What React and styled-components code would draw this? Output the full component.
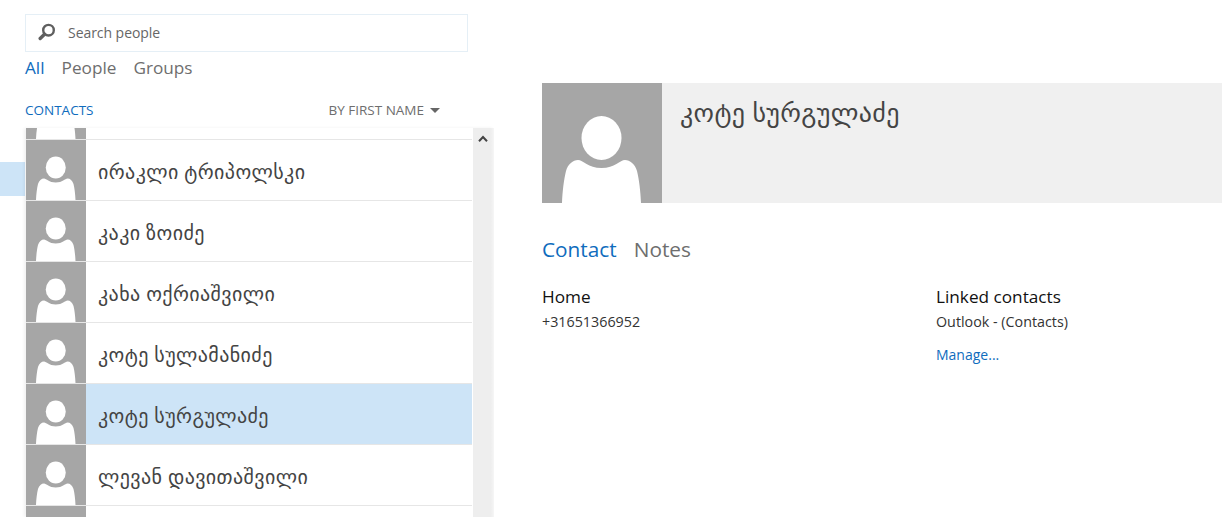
import React from 'react';
import styled, { createGlobalStyle } from 'styled-components';

const GlobalStyle = createGlobalStyle`
  html, body {
    margin: 0;
    height: 100%;
    overflow: hidden;
    background: #fff;
    font-family: "Open Sans", "DejaVu Sans", sans-serif;
  }
`;

const Page = styled.div`
  display: flex;
  width: 1222px;
  height: 517px;
  overflow: hidden;
`;

const Rail = styled.div`
  width: 25px;
  flex: none;
  padding-top: 162px;
`;

const RailSelected = styled.div`
  height: 34px;
  background: #cde4f7;
`;

const PeoplePane = styled.div`
  width: 469px;
  flex: none;
  padding-top: 14px;
  display: flex;
  flex-direction: column;
`;

const SearchBox = styled.div`
  width: 443px;
  height: 38px;
  box-sizing: border-box;
  border: 1px solid #e5eff6;
  display: flex;
  align-items: center;
  padding: 0 0 2px 12px;
  gap: 12px;
  font-size: 14px;
  letter-spacing: -0.05px;
  color: #666;
`;

const Tabs = styled.div`
  display: flex;
  gap: 17px;
  font-size: ${(p) => p.$size}px;
  line-height: 32px;
`;

const Tab = styled.span`
  color: ${(p) => (p.$active ? '#0f6cbd' : '#6e6e6e')};
`;

const ListHeader = styled.div`
  display: flex;
  justify-content: space-between;
  align-items: center;
  width: 415px;
  height: 20px;
  margin-top: 16px;
  margin-bottom: 8px;
  font-size: 13.5px;
`;

const ContactsLabel = styled.span`
  color: #0f6cbd;
`;

const SortLabel = styled.span`
  display: flex;
  align-items: center;
  gap: 6px;
  color: #6e6e6e;
`;

const Caret = styled.span`
  width: 0;
  height: 0;
  border-left: 5.5px solid transparent;
  border-right: 5.5px solid transparent;
  border-top: 5px solid #666;
`;

const ListFrame = styled.div`
  display: flex;
  flex: 1;
  min-height: 0;
  overflow: hidden;
  margin-left: 1px;
  width: 468px;
  box-shadow: -2px 0 3px rgba(0, 0, 0, 0.06);
`;

const List = styled.div`
  flex: 1;
  overflow: hidden;
`;

const Rows = styled.div`
  margin-top: -49px;
`;

const Row = styled.div`
  display: flex;
  align-items: center;
  height: 60px;
  border-bottom: 1px solid #e6e6e6;
  background: ${(p) => (p.$selected ? '#cde4f7' : '#fff')};
  font-size: 20px;
  letter-spacing: 0.4px;
  color: #444;
`;

const RowName = styled.span`
  margin: 2px 0 0 12px;
`;

const Scrollbar = styled.div`
  width: 21px;
  flex: none;
  margin-left: 1px;
  background: linear-gradient(to right, #eeeeee 85%, #f6f6f6);
  display: flex;
  justify-content: center;
  padding: 7px 1px 0 0;
  box-sizing: border-box;
`;

const Detail = styled.div`
  flex: 1;
  margin-left: 48px;
  padding-top: 83px;
`;

const DetailHeader = styled.div`
  display: flex;
  height: 120px;
  background: #f0f0f0;
`;

const DetailName = styled.div`
  margin: 12px 0 0 18px;
  font-size: 26px;
  letter-spacing: 0.35px;
  line-height: 34px;
  color: #444;
`;

const DetailTabs = styled.div`
  margin-top: 30px;
`;

const Columns = styled.div`
  display: flex;
  margin-top: 20px;
`;

const Column = styled.div`
  width: 394px;
  flex: none;
`;

const ColumnTitle = styled.div`
  font-size: 17.2px;
  line-height: 24px;
  color: #111;
`;

const ColumnText = styled.div`
  font-size: 14.3px;
  line-height: 26px;
  color: #333;
`;

const ManageLink = styled.div`
  font-size: 14px;
  line-height: 20px;
  margin-top: 10px;
  color: #0f6cbd;
`;

const Avatar = ({ size }) => (
  <svg width={size} height={size} viewBox="0 0 120 120" style={{ flex: 'none', display: 'block' }}>
    <rect width="120" height="120" fill="#a6a6a6" />
    <ellipse cx="59.5" cy="55" rx="20" ry="22" fill="#fff" />
    <path
      d="M20 120C20.5 108 22 96 24 88C26 81 31 77 36 77C41 77 46 85 59.5 85C73 85 78 77 83 77C88 77 93 81 95 88C97 96 98.5 108 99 120Z"
      fill="#fff"
    />
  </svg>
);

const SearchIcon = () => (
  <svg width="18" height="18" viewBox="0 0 18 18" fill="none">
    <circle cx="10.5" cy="7.2" r="5.3" stroke="#5f5f5f" strokeWidth="2.4" />
    <path d="M6.5 11.2L2.2 15.5" stroke="#5f5f5f" strokeWidth="3.4" strokeLinecap="round" />
  </svg>
);

const UpChevron = () => (
  <svg width="10" height="8" viewBox="0 0 10 8" fill="none">
    <path d="M1 6.2L5 2L9 6.2" stroke="#444" strokeWidth="2" />
  </svg>
);

const contacts = [
  { name: '' },
  { name: 'ირაკლი ტრიპოლსკი' },
  { name: 'კაკი ზოიძე' },
  { name: 'კახა ოქრიაშვილი' },
  { name: 'კოტე სულამანიძე' },
  { name: 'კოტე სურგულაძე', selected: true },
  { name: 'ლევან დავითაშვილი' },
  { name: '' },
];

const App = () => (
  <Page>
    <GlobalStyle />
    <Rail>
      <RailSelected />
    </Rail>
    <PeoplePane>
      <SearchBox>
        <SearchIcon />
        Search people
      </SearchBox>
      <Tabs $size={17.2}>
        <Tab $active>All</Tab>
        <Tab>People</Tab>
        <Tab>Groups</Tab>
      </Tabs>
      <ListHeader>
        <ContactsLabel>CONTACTS</ContactsLabel>
        <SortLabel>
          BY FIRST NAME
          <Caret />
        </SortLabel>
      </ListHeader>
      <ListFrame>
        <List>
          <Rows>
            {contacts.map((c, i) => (
              <Row key={i} $selected={c.selected}>
                <Avatar size={60} />
                <RowName>{c.name}</RowName>
              </Row>
            ))}
          </Rows>
        </List>
        <Scrollbar>
          <UpChevron />
        </Scrollbar>
      </ListFrame>
    </PeoplePane>
    <Detail>
      <DetailHeader>
        <Avatar size={120} />
        <DetailName>კოტე სურგულაძე</DetailName>
      </DetailHeader>
      <DetailTabs>
        <Tabs $size={20.8}>
          <Tab $active>Contact</Tab>
          <Tab>Notes</Tab>
        </Tabs>
      </DetailTabs>
      <Columns>
        <Column>
          <ColumnTitle>Home</ColumnTitle>
          <ColumnText>+31651366952</ColumnText>
        </Column>
        <Column>
          <ColumnTitle>Linked contacts</ColumnTitle>
          <ColumnText>Outlook - (Contacts)</ColumnText>
          <ManageLink>Manage...</ManageLink>
        </Column>
      </Columns>
    </Detail>
  </Page>
);

export default App;
